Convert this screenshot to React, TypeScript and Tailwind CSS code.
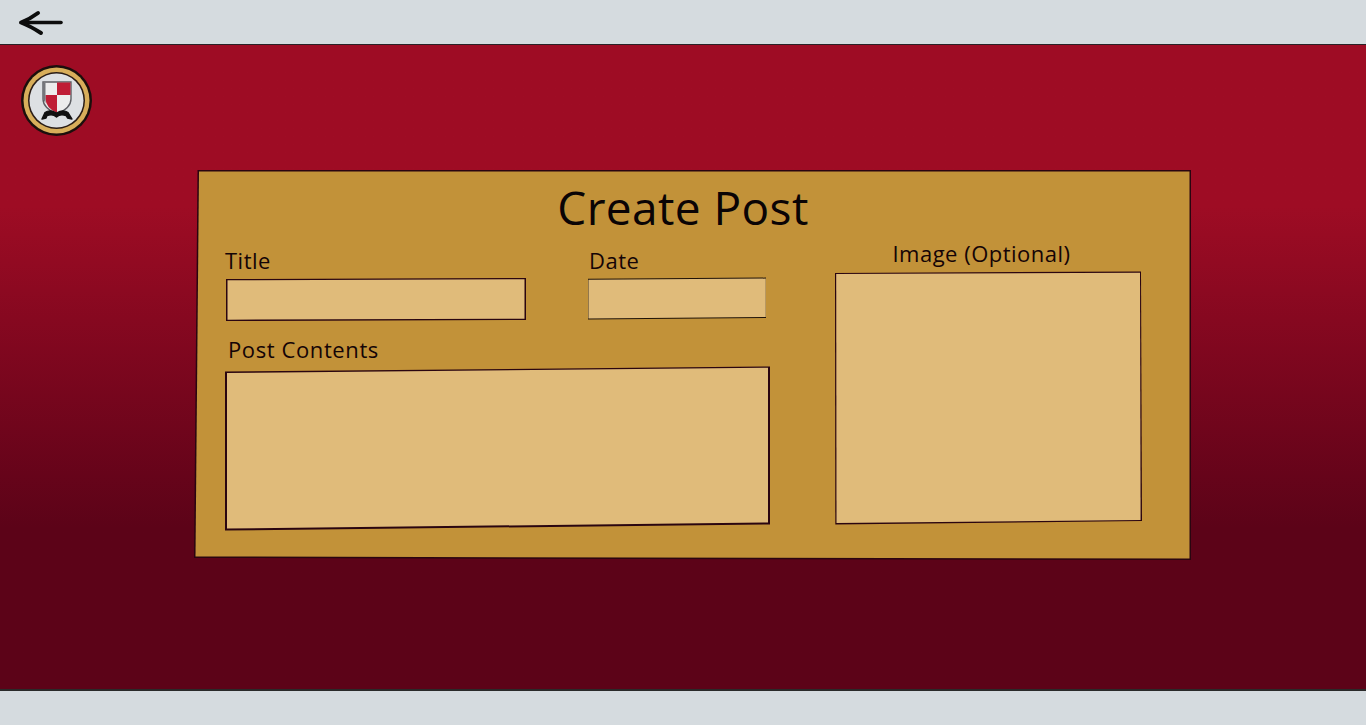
export default function App() {
  return (
    <div className="h-[725px] flex flex-col font-['Open_Sans',sans-serif] text-[#140406] overflow-hidden">
      {/* Top bar */}
      <div className="h-[45px] bg-[#d5dbdf] border-b border-[#2a2226] flex items-center pl-[17px]">
        <svg width="48" height="28" viewBox="0 0 48 28" fill="none" stroke="#0d0d0d" strokeLinecap="round" strokeLinejoin="round" className="mt-[2px]">
          <path d="M5 13.5 L44 13.5" strokeWidth="3.6" />
          <path d="M21 4 Q13 10 4 13.5 Q13 17 24 24" strokeWidth="4" />
        </svg>
      </div>

      {/* Main */}
      <div className="flex-1 bg-linear-to-b from-[#9e0c24] from-[25%] to-[#5c0318] to-[75%] pt-[20px]">
        <div className="ml-[21px] w-[71px] h-[71px]">
          <svg width="71" height="71" viewBox="0 0 71 71">
            <circle cx="35.5" cy="35.5" r="35.5" fill="#1b0f0c" />
            <circle cx="35.5" cy="35.5" r="33" fill="#d8ae5a" />
            <circle cx="35.5" cy="35.5" r="28.5" fill="#2a1d16" />
            <circle cx="35.5" cy="35.5" r="27" fill="#dde0e3" />
            <path d="M22 17 H50 V34 Q50 43 36 49 Q22 43 22 34 Z" fill="#ececec" stroke="#5d5e63" strokeWidth="1.4" />
            <path d="M36 17.5 H49.5 V30 H36 Z" fill="#bf1d35" />
            <path d="M24.5 30 H36 V48 Q25 43 24.5 34 Z" fill="#bf1d35" />
            <path d="M22 17.5 H24.5 V38 L22 34 Z" fill="#75767b" />
            <path d="M21 54 L24 47.5 Q29 44 35.5 48 Q42 44 47 47.5 L51 54 L46.5 53 L45 50.5 Q39 48.5 35.5 52 Q32 48.5 26 50.5 L25 53 Z" fill="#111" stroke="#111" strokeWidth="1.4" strokeLinejoin="round" />
          </svg>
        </div>

        {/* Form card */}
        <div className="mt-[34px] ml-[194px] w-[997px] h-[390px] bg-[#2a0510] [clip-path:polygon(3.5px_0,997px_0,997px_390px,0_388px)]">
          <div className="h-full bg-[#c29239] pt-[9px] [clip-path:polygon(5px_1.5px,995.5px_1.5px,995.5px_388.5px,1.5px_386.5px)]">
            <h1 className="text-center pr-[19px] text-[46px] leading-[56px] tracking-[0.4px] text-[#0a0405]">Create Post</h1>

            <div className="flex pl-[31px] gap-[65px]">
              <div className="w-[545px]">
                <div className="flex mt-[10px] pl-[1px] gap-[62px]">
                  <div className="w-[300px]">
                    <div className="-ml-[1px] text-[22px] leading-[30px] tracking-[0.5px] h-[33px]">Title</div>
                    <div className="h-[43px] bg-[#2a0510] [clip-path:polygon(0_1px,300px_0,300px_42px,0_43px)]">
                      <div className="h-full bg-[#e0bb7a] [clip-path:polygon(1.5px_2.3px,298.5px_1.3px,298.5px_40.7px,1.5px_41.7px)]" />
                    </div>
                  </div>
                  <div className="w-[178px]">
                    <div className="pl-[1px] text-[22px] leading-[30px] tracking-[0.5px] h-[32px]">Date</div>
                    <div className="h-[43px] bg-[#1f1208] [clip-path:polygon(0_1.8px,178px_0.6px,178px_41px,0_42.6px)]">
                      <div className="h-full bg-[#e0bb7a] [clip-path:polygon(0.4px_2.8px,177.8px_1.6px,177.8px_40px,0.4px_41.6px)]" />
                    </div>
                  </div>
                </div>
                <div className="mt-[13px] ml-[3px] text-[22px] leading-[30px] tracking-[0.6px] h-[32px]">Post Contents</div>
                <div className="h-[165px] bg-[#2a0510] [clip-path:polygon(0_5.5px,545px_0.5px,545px_158.5px,0_164.5px)]">
                  <div className="h-full bg-[#e0bb7a] [clip-path:polygon(2px_7px,543px_1.8px,543px_156.5px,2px_162.5px)]" />
                </div>
              </div>

              <div className="w-[307px]">
                <div className="mt-[3px] text-center pr-[14px] text-[22px] leading-[30px] tracking-[0.5px] h-[33px]">Image (Optional)</div>
                <div className="h-[254px] bg-[#2a0510] [clip-path:polygon(0_2px,306px_0.5px,307px_250px,0.3px_253.5px)]">
                  <div className="h-full bg-[#e0bb7a] [clip-path:polygon(1.2px_3px,305px_1.8px,305.6px_249px,1.5px_252px)]" />
                </div>
              </div>
            </div>
          </div>
        </div>
      </div>

      {/* Bottom bar */}
      <div className="h-[36px] bg-[#d5dbdf] border-t-2 border-[#2a2a2a]" />
    </div>
  );
}
